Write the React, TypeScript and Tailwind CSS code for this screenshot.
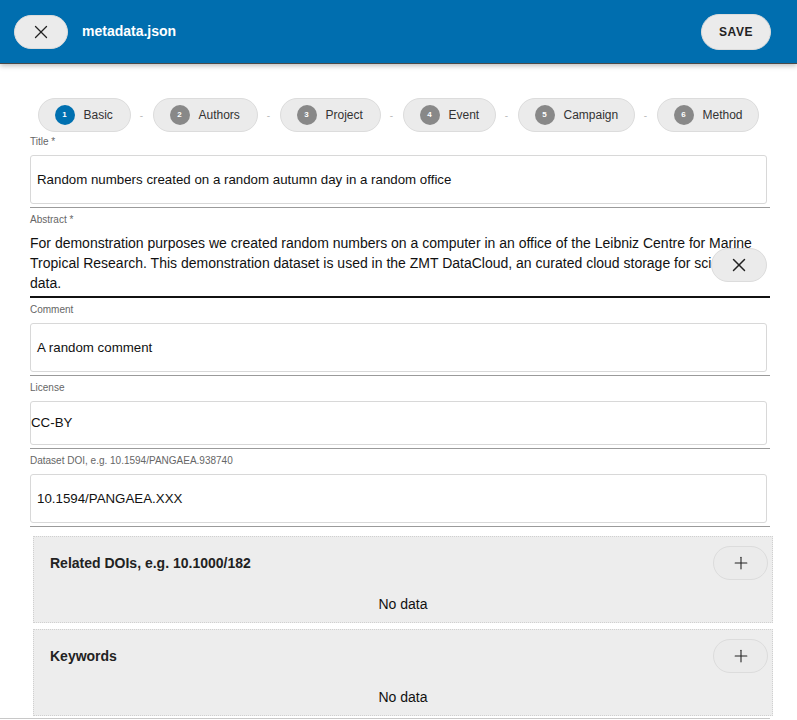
import { Plus, X } from 'lucide-react'

const steps = [
  { n: 1, label: 'Basic', w: 'w-[93px]' },
  { n: 2, label: 'Authors', w: 'w-[105px]' },
  { n: 3, label: 'Project', w: 'w-[101px]' },
  { n: 4, label: 'Event', w: 'w-[93px]' },
  { n: 5, label: 'Campaign', w: 'w-[117px]' },
  { n: 6, label: 'Method', w: 'w-[102px]' },
]

function PillButton({ children, className = '' }: { children: React.ReactNode; className?: string }) {
  return (
    <button
      className={
        'flex items-center justify-center rounded-full border border-[#dcdcdc] bg-[#ebebeb] text-[#222] ' +
        className
      }
    >
      {children}
    </button>
  )
}

function Field({
  label,
  value,
  boxHeight,
  padded = true,
}: {
  label: string
  value: string
  boxHeight: string
  padded?: boolean
}) {
  return (
    <div>
      <div className="mt-[6px] h-3 text-[10px] leading-3 text-[#666]">{label}</div>
      <div
        className={
          'mt-[7px] mr-[3px] flex items-center rounded-[3px] border border-[#d8d8d8] text-[13.3px] text-[#111] ' +
          boxHeight +
          (padded ? ' pl-[6px]' : ' pl-0')
        }
      >
        {value}
      </div>
      <div className="mt-[3px] h-px bg-[#9a9a9a]" />
    </div>
  )
}

function ListPanel({ title }: { title: string }) {
  return (
    <div className="ml-[3px] h-[87px] border border-dotted border-[#d0d0d0] bg-[#ededed] px-4 pt-[9px]">
      <div className="flex h-[34px] items-center justify-between">
        <div className="text-[14px] font-bold text-[#222]">{title}</div>
        <PillButton className="-mr-[12px] h-[34px] w-[55px]">
          <Plus size={20} strokeWidth={1.3} />
        </PillButton>
      </div>
      <div className="mt-[14px] text-center text-[14px] leading-5 text-[#111]">No data</div>
    </div>
  )
}

export default function App() {
  return (
    <div className="min-h-[720px] w-[797px] overflow-hidden bg-white font-[family-name:'Liberation_Sans',Arial,sans-serif]">
      <header className="relative z-10 flex h-[64px] items-center justify-between border-b border-[#4a4a4a] bg-[#006eaf] pl-[14px] pr-[26px] shadow-[0_2px_5px_rgba(0,0,0,0.25)]">
        <div className="flex items-center gap-[14px]">
          <PillButton className="h-[34px] w-[54px]">
            <X size={22} strokeWidth={1.4} />
          </PillButton>
          <span className="text-[14px] font-bold text-white">metadata.json</span>
        </div>
        <PillButton className="h-[36px] w-[70px] text-[12px] font-bold tracking-[0.6px]">SAVE</PillButton>
      </header>

      <div className="pl-[30px] pr-[27px]">
        <div className="mt-[34px] mr-[4px] flex h-[34px] items-center justify-center">
          {steps.map((s, i) => (
            <div key={s.n} className="flex items-center">
              {i > 0 && <span className="w-[22px] text-center text-[10px] text-[#bbb]">-</span>}
              <div
                className={
                  'flex h-[34px] items-center rounded-full border border-[#dcdcdc] bg-[#ebebeb] pl-4 ' + s.w
                }
              >
                <span
                  className={
                    'flex h-5 w-5 items-center justify-center rounded-full text-[8px] font-bold text-white ' +
                    (s.n === 1 ? 'bg-[#0070b0]' : 'bg-[#888]')
                  }
                >
                  {s.n}
                </span>
                <span className="ml-[9px] text-[12px] text-[#333]">{s.label}</span>
              </div>
            </div>
          ))}
        </div>

        <div className="-mt-[2px]">
          <Field
            label="Title *"
            value="Random numbers created on a random autumn day in a random office"
            boxHeight="h-[49px]"
          />
        </div>

        <div className="relative">
          <div className="mt-[6px] h-3 text-[10px] leading-3 text-[#666]">Abstract *</div>
          <p className="mt-[7px] text-[14px] leading-5 text-[#111]">
            For demonstration purposes we created random numbers on a computer in an office of the Leibniz Centre
            for Marine Tropical Research. This demonstration dataset is used in the ZMT DataCloud, an curated cloud
            storage for scientific data.
          </p>
          <div className="mt-[3px] h-[2px] bg-[#111]" />
          <PillButton className="absolute right-[3px] top-[34px] h-[34px] w-[56px]">
            <X size={22} strokeWidth={1.6} />
          </PillButton>
        </div>

        <Field label="Comment" value="A random comment" boxHeight="h-[49px]" />
        <Field label="License" value="CC-BY" boxHeight="h-[44px]" padded={false} />
        <Field label="Dataset DOI, e.g. 10.1594/PANGAEA.938740" value="10.1594/PANGAEA.XXX" boxHeight="h-[49px]" />

        <div className="mt-[9px] flex flex-col gap-[6px]">
          <div className="-mr-[3px]">
            <ListPanel title="Related DOIs, e.g. 10.1000/182" />
          </div>
          <div className="-mr-[3px]">
            <ListPanel title="Keywords" />
          </div>
        </div>
      </div>
      <div className="mt-[2px] mr-[27px] h-px bg-[#c8c8c8]" />
    </div>
  )
}
